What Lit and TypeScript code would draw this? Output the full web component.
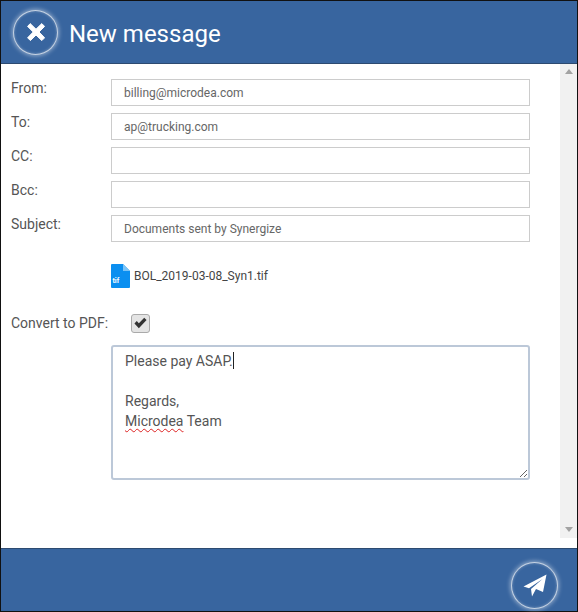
import { LitElement, css, html, svg } from 'lit';
import { customElement } from 'lit/decorators.js';

const FIELDS = [
  { label: 'From:', value: 'billing@microdea.com' },
  { label: 'To:', value: 'ap@trucking.com' },
  { label: 'CC:', value: '' },
  { label: 'Bcc:', value: '' },
  { label: 'Subject:', value: 'Documents sent by Synergize' },
];

const closeIcon = svg`<path d="M3.2 0.6 9 6.2 14.8 0.6 17.6 3.4 12 9 17.6 14.8 14.8 17.6 9 12 3.4 17.6 0.6 14.8 6.2 9 0.6 3.4Z" stroke="#fff" stroke-width="1" stroke-linejoin="round"/>`;
const sendIcon = svg`<path d="M23.5 0.5 L20 18 L13 15 L9 22.5 L8 15 L19.5 5 L6 14.3 L0.5 12.5 Z"/>`;

@customElement('app-root')
export class AppRoot extends LitElement {
  override render() {
    return html`
      <div class="frame">
        <header class="bar top">
          <button class="round" type="button">
            <svg width="18" height="18" viewBox="0 0 18 18" fill="#fff">${closeIcon}</svg>
          </button>
          <h1>New message</h1>
        </header>
        <div class="middle">
          <main class="form">
            ${FIELDS.map(
              (f) => html`<div class="row">
                <span class="label">${f.label}</span>
                <div class="field">${f.value}</div>
              </div>`
            )}
            <div class="attachment">
              <svg width="19" height="24" viewBox="0 0 19 24">
                <path d="M1 0H12L19 7V23a1 1 0 0 1-1 1H1a1 1 0 0 1-1-1V1a1 1 0 0 1 1-1Z" fill="#0b8ff0" />
                <path d="M12 0L19 7H12Z" fill="#7cc4f6" />
                <text x="1.5" y="19" class="ext">tif</text>
              </svg>
              <span class="file">BOL_2019-03-08_Syn1.tif</span>
            </div>
            <div class="convert">
              <span class="label">Convert to PDF:</span>
              <span class="check">
                <svg width="13" height="12" viewBox="0 0 15 13">
                  <path d="M0.5 7 3.2 4.2 5.6 6.8 11.8 0.4 14.5 3 5.6 12.6Z" fill="#333" />
                </svg>
              </span>
            </div>
            <div class="message">
              <div>Please pay ASAP.<span class="caret"></span></div>
              <div>&nbsp;</div>
              <div>Regards,</div>
              <div><span class="typo">Microdea</span> Team</div>
            </div>
          </main>
          <aside class="scroll">
            <span class="arrow up"></span>
            <span class="arrow down"></span>
          </aside>
        </div>
        <footer class="bar bottom">
          <button class="round" type="button">
            <svg width="24" height="24" viewBox="0 0 24 24" fill="#fff">${sendIcon}</svg>
          </button>
        </footer>
      </div>
    `;
  }

  static override styles = css`
    :host {
      display: block;
      width: 578px;
      height: 612px;
      font-family: Roboto, 'Liberation Sans', sans-serif;
      color: #555;
    }

    .frame {
      box-sizing: border-box;
      height: 612px;
      display: flex;
      flex-direction: column;
      background: #fff;
      border: 1px solid #111;
    }

    .bar {
      flex: none;
      display: flex;
      align-items: center;
      background: #38659f;
      box-sizing: border-box;
    }

    .top {
      border-bottom: 1px solid #2d4a70;
      height: 63px;
      padding-left: 12px;
      gap: 11px;
    }

    .bottom {
      border-top: 1px solid #2d4a70;
      height: 63px;
      justify-content: flex-end;
      align-items: flex-end;
      padding: 0 19px 2px 0;
    }

    .round {
      box-sizing: border-box;
      width: 45px;
      height: 45px;
      padding: 0;
      display: flex;
      align-items: center;
      justify-content: center;
      border-radius: 50%;
      background: #38659f;
      border: 1px solid rgba(255, 255, 255, 0.7);
      box-shadow: 0 0 4px 1px rgba(255, 255, 255, 0.45), inset 0 0 3px rgba(255, 255, 255, 0.35);
    }

    .bottom .round {
      width: 47px;
      height: 47px;
    }

    h1 {
      margin: 3px 0 0;
      font-size: 24px;
      font-weight: 400;
      color: #fff;
    }

    .middle {
      flex: 1;
      min-height: 0;
      display: flex;
    }

    .form {
      flex: 1;
      min-width: 0;
      padding: 15px 0 0 10px;
      font-size: 14px;
    }

    .row {
      display: flex;
      height: 27px;
      margin-bottom: 7px;
    }

    .label {
      flex: none;
      width: 100px;
      line-height: 18px;
      color: #555;
    }

    .field {
      box-sizing: border-box;
      width: 419px;
      height: 27px;
      padding-left: 12px;
      border: 1px solid #ccc;
      font-size: 12px;
      line-height: 27px;
      color: #666;
    }

    .attachment {
      display: flex;
      align-items: center;
      gap: 4px;
      margin: 22px 0 0 100px;
      height: 24px;
    }

    .ext {
      font: 700 7px Roboto, sans-serif;
      fill: #fff;
    }

    .file {
      font-size: 12px;
      color: #444;
    }

    .convert {
      display: flex;
      align-items: center;
      height: 20px;
      margin-top: 25px;
    }

    .convert .label {
      width: 120px;
    }

    .check {
      box-sizing: border-box;
      width: 19px;
      height: 19px;
      display: flex;
      align-items: center;
      justify-content: center;
      background: #e4e4e4;
      border: 1px solid #aaa;
      border-radius: 3px;
    }

    .message {
      box-sizing: border-box;
      width: 419px;
      height: 135px;
      margin: 12px 0 0 100px;
      padding: 4px 12px;
      border: 2px solid #bcc8d8;
      border-radius: 3px;
      font-size: 14px;
      line-height: 20px;
      color: #555;
      overflow: auto;
      resize: both;
    }

    .caret {
      display: inline-block;
      width: 1px;
      height: 17px;
      background: #222;
      vertical-align: -3px;
    }

    .typo {
      text-decoration: underline wavy #d22;
      text-decoration-thickness: 1px;
      text-underline-offset: 2px;
    }

    .scroll {
      flex: none;
      width: 17px;
      margin-bottom: 10px;
      background: #f1f1f1;
      display: flex;
      flex-direction: column;
      justify-content: space-between;
      align-items: center;
      padding: 5px 0 6px;
    }

    .arrow {
      width: 0;
      height: 0;
      border-left: 4px solid transparent;
      border-right: 4px solid transparent;
    }

    .up {
      border-bottom: 5px solid #a3a3a3;
    }

    .down {
      border-top: 5px solid #a3a3a3;
    }
  `;
}
